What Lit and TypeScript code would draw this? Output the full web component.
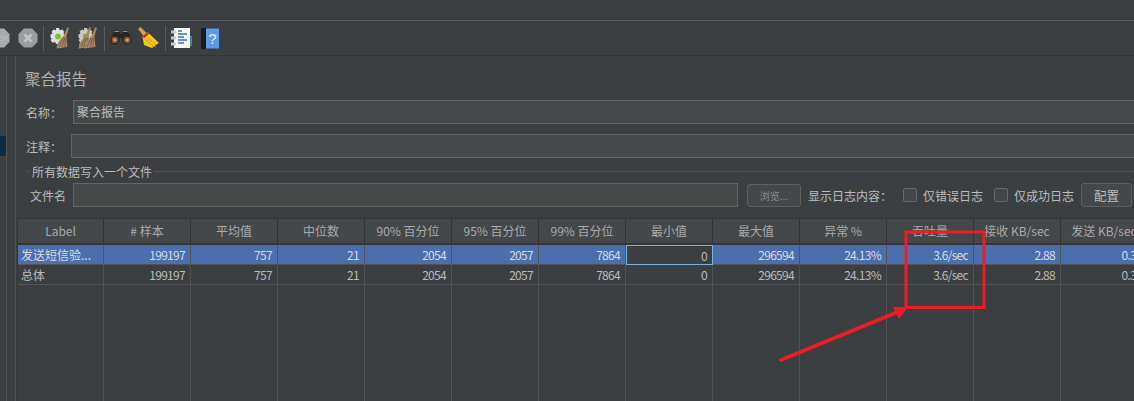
import { LitElement, css, html, svg } from 'lit'
import { customElement } from 'lit/decorators.js'

const headers = ['Label', '# 样本', '平均值', '中位数', '90% 百分位', '95% 百分位', '99% 百分位', '最小值', '最大值', '异常 %', '吞吐量', '接收 KB/sec', '发送 KB/sec']
const selected = ['发送短信验...', '199197', '757', '21', '2054', '2057', '7864', '0', '296594', '24.13%', '3.6/sec', '2.88', '0.30']
const total = ['总体', '199197', '757', '21', '2054', '2057', '7864', '0', '296594', '24.13%', '3.6/sec', '2.88', '0.30']

const stopIcon = (label: string, fill: string) => svg`
  <svg width="20" height="20" viewBox="0 0 20 20">
    <path d="M6 0.500h8l5.500 5.500v8L14 19.500H6L0.500 14V6z" fill=${fill}/>
    ${label
      ? svg`<text x="13" y="13" font-size="7" font-family="Liberation Sans" font-weight="700" text-anchor="middle" fill="#b9babb">${label}</text>`
      : svg`<path d="M6.500 6.500l7 7M13.500 6.500l-7 7" stroke="#c4c5c6" stroke-width="2.600"/>`}
  </svg>`

const gear = svg`
  <path d="M6 1h3l.8 2.200 2.400-.8 2 2-.8 2.400L15.500 7.500v3l-2.100.8.800 2.400-2 2-2.400-.8L9 17H6l-.8-2.100-2.400.8-2-2 .8-2.400L.5 10.500v-3l1.900-.7-.8-2.400 2-2 2.400.8z" fill="#dedede"/>
  <circle cx="8" cy="9.500" r="3" fill="#7cc42f"/>`

const broomHead = svg`
  <path d="M17.500 0l1.500.8-2.600 8.500 1.100 10.700-11 1.500 1-5.500 6.200-7.500z" fill="#a98561"/>
  <path d="M9 20l4-9M12 20l2.500-9M15 20l.5-9" stroke="#80603f"/>`

const clearIcon = svg`
  <svg width="20" height="22" viewBox="0 0 20 22">${gear}${broomHead}</svg>`

const clearAllIcon = svg`
  <svg width="20" height="22" viewBox="0 0 20 22">
    <g opacity="0.85">${gear}</g>
    <g transform="translate(-6 0)">${broomHead}</g>
    ${broomHead}
  </svg>`

const binoculars = svg`
  <svg width="22" height="14" viewBox="0 0 22 14">
    <path d="M4.500 0h4.500l1 3h2l1-3h4.500l4.500 9a5 5 0 0 1-9.500 1.500V7h-3v3.500A5 5 0 0 1 0 9z" fill="#232527"/>
    <circle cx="4.800" cy="9" r="3.300" fill="#8f5a33"/>
    <circle cx="17.200" cy="9" r="3.300" fill="#8f5a33"/>
    <circle cx="4.800" cy="9" r="1.300" fill="#d8b080"/>
    <circle cx="17.200" cy="9" r="1.300" fill="#d8b080"/>
    <path d="M4.500 0.500h4.500M13 0.500h4.500" stroke="#8a8c8e"/>
  </svg>`

const broom = svg`
  <svg width="21" height="22" viewBox="0 0 21 22">
    <path d="M0 2l2.500-2 6.500 6.500-3 3z" fill="#d2a24c"/>
    <path d="M4.500 9.500l5-4.500 11.500 11-3 2-1-.8.500 2.800-2.500-.8-.5 2-8.500-3.200z" fill="#f2c81e"/>
    <path d="M4.500 9.500l5-4.500 1.500 1.700-5 4.500z" fill="#d52222"/>
    <path d="M8 13l7 6M10 11l7 6" stroke="#c49a12"/>
  </svg>`

const notes = svg`
  <svg width="21" height="20" viewBox="0 0 21 20">
    <rect x="17" y="8" width="4" height="5" fill="#3c7fd0"/>
    <rect x="17" y="13" width="4" height="5" fill="#3f9b3a"/>
    <rect x="3" y="0" width="16" height="20" fill="#fbfbfb"/>
    <path d="M7 3h4M7 6h9M7 9h6M7 12h9M7 15h6" stroke="#2f72d8" stroke-width="1.300"/>
    <path d="M0 4h5M0 10h5M0 16h5" stroke="#c9c9c9" stroke-width="3"/>
  </svg>`

const helpBook = svg`
  <svg width="18" height="21" viewBox="0 0 18 21">
    <rect x="0" y="0" width="6" height="21" rx="1" fill="#17191b"/>
    <rect x="5" y="0.500" width="13" height="20" fill="#5a9bea"/>
    <text x="11.500" y="15.500" font-size="15" font-family="Liberation Sans" text-anchor="middle" fill="#e6f0fb">?</text>
  </svg>`

@customElement('app-root')
export class AppRoot extends LitElement {
  static styles = css`
    :host {
      display: block;
      width: 1134px;
      height: 401px;
      position: relative;
      overflow: hidden;
      background: #3c3f41;
      color: #bbbbbb;
      font-family: "Noto Sans CJK SC", "Noto Sans", sans-serif;
      font-size: 12px;
    }
    .menubar {
      height: 20px;
      border-bottom: 1px solid #5a5b5c;
    }
    .toolbar {
      height: 34px;
      border-bottom: 1px solid #323436;
      display: flex;
      align-items: center;
    }
    .toolbar > * { flex: none; }
    .stop-first { margin-left: -10px; }
    .stop-second { margin-left: 8px; }
    .sep {
      width: 1px;
      height: 25px;
      background: #5b5d5f;
    }
    .icon { display: flex; align-items: center; justify-content: center; }
    .body {
      display: flex;
      height: 345px;
    }
    .gutter {
      width: 6px;
      border-right: 1px solid #515355;
      padding-top: 80px;
      flex: none;
    }
    .gutter i {
      display: block;
      height: 20px;
      background: #0d2c45;
    }
    .gutter2 {
      width: 8px;
      border-right: 1px solid #515355;
      flex: none;
    }
    .main {
      flex: 1;
      min-width: 0;
      overflow: hidden;
      display: flex;
      flex-direction: column;
    }
    .title {
      font-size: 15.500px;
      line-height: 22px;
      margin: 11px 0 0 9px;
      color: #b0b0b0;
    }
    .row {
      display: flex;
      align-items: center;
      height: 24px;
    }
    .row > * { flex: none; }
    .name-row { margin-top: 11px; padding-left: 10px; }
    .comment-row { margin-top: 10px; padding-left: 10px; }
    .lbl { white-space: nowrap; }
    .name-row .lbl { width: 47px; }
    .comment-row .lbl { width: 45px; }
    .input {
      height: 24px;
      box-sizing: border-box;
      background: #45494a;
      border: 1px solid #646464;
      border-right: none;
      padding-left: 3px;
      line-height: 22px;
      color: #bbbbbb;
    }
    .name-row .input, .comment-row .input { flex: 1; }
    .legend-line {
      display: flex;
      align-items: center;
      height: 14px;
      margin-top: 6px;
      margin-left: 11px;
    }
    .legend-line::before {
      content: '';
      width: 3px;
      height: 1px;
      background: #515355;
      margin-right: 2px;
    }
    .legend-line::after {
      content: '';
      flex: 1;
      height: 1px;
      background: #515355;
      margin-left: 2px;
    }
    .file-row { margin-top: 5px; padding-left: 14px; }
    .file-row .lbl { width: 43px; }
    .file-row .input {
      width: 665px;
      border-right: 1px solid #646464;
    }
    .btn {
      box-sizing: border-box;
      border: 1px solid #5e6060;
      border-radius: 3px;
      background: #45484a;
      display: flex;
      align-items: center;
      justify-content: center;
    }
    .browse {
      width: 54px;
      height: 23px;
      margin-left: 9px;
      font-size: 10px;
      color: #8c8e8f;
    }
    .file-row .log-label { margin-left: 7px; width: 95px; }
    .check {
      width: 14px;
      height: 14px;
      box-sizing: border-box;
      border: 1px solid #66686a;
      border-radius: 2px;
      background: #43474a;
    }
    .check-label { margin-left: 6px; white-space: nowrap; }
    .w1 { width: 71px; }
    .w2 { width: 67px; }
    .config {
      width: 51px;
      height: 24px;
      font-size: 12.500px;
    }
    .table {
      margin-top: 11px;
      margin-left: 1px;
      flex: 1;
      display: grid;
      grid-template-columns: 86px repeat(12, 87px);
      grid-template-rows: 26px 20px 20px 1fr;
      border-top: 1px solid #323436;
      border-left: 1px solid #323436;
      min-height: 0;
    }
    .th, .td {
      box-sizing: border-box;
      white-space: nowrap;
      overflow: hidden;
      line-height: 19px;
    }
    .th {
      background: #45484a;
      border-right: 1px solid #323436;
      border-bottom: 2px solid #323436;
      text-align: center;
      line-height: 24px;
      color: #a9abac;
    }
    .td {
      text-align: right;
      padding: 0 5px 0 0;
      border-right: 1px solid #515355;
      border-bottom: 1px solid #515355;
    }
    .td.first { text-align: left; padding-left: 3px; }
    .td.num { letter-spacing: -0.700px; }
    .td.sel { background: #4b6eaf; color: #d6dce8; }
    .td.focus {
      background: #3c3f41;
      color: #bbbbbb;
      border: 1px solid #7ab4e0;
    }
    .fill { border-right: 1px solid #515355; }
    .overlay {
      position: absolute;
      left: 0;
      top: 0;
      pointer-events: none;
    }
  `

  render() {
    return html`
      <div class="menubar"></div>
      <div class="toolbar">
        <span class="icon stop-first">${stopIcon('OP', '#a9abac')}</span>
        <span class="icon stop-second">${stopIcon('', '#9a9c9d')}</span>
        <span class="sep" style="margin-left:5px"></span>
        <span class="icon" style="margin-left:6px">${clearIcon}</span>
        <span class="icon" style="margin-left:8px">${clearAllIcon}</span>
        <span class="sep" style="margin-left:6px"></span>
        <span class="icon" style="margin-left:5px">${binoculars}</span>
        <span class="icon" style="margin-left:6px">${broom}</span>
        <span class="sep" style="margin-left:6px"></span>
        <span class="icon" style="margin-left:5px">${notes}</span>
        <span class="icon" style="margin-left:9px">${helpBook}</span>
      </div>
      <div class="body">
        <div class="gutter"><i></i></div>
        <div class="gutter2"></div>
        <div class="main">
          <div class="title">聚合报告</div>
          <div class="row name-row">
            <span class="lbl">名称：</span>
            <div class="input">聚合报告</div>
          </div>
          <div class="row comment-row">
            <span class="lbl">注释：</span>
            <div class="input"></div>
          </div>
          <div class="legend-line">所有数据写入一个文件</div>
          <div class="row file-row">
            <span class="lbl">文件名</span>
            <div class="input"></div>
            <div class="btn browse">浏览...</div>
            <span class="lbl log-label">显示日志内容：</span>
            <span class="check"></span>
            <span class="check-label w1">仅错误日志</span>
            <span class="check"></span>
            <span class="check-label w2">仅成功日志</span>
            <div class="btn config">配置</div>
          </div>
          <div class="table">
            ${headers.map((h) => html`<div class="th">${h}</div>`)}
            ${selected.map((v, i) => html`<div class="td ${i === 0 ? 'first' : 'num'} ${i === 7 ? 'focus' : 'sel'}">${v}</div>`)}
            ${total.map((v, i) => html`<div class="td ${i === 0 ? 'first' : 'num'}">${v}</div>`)}
            ${headers.map(() => html`<div class="fill"></div>`)}
          </div>
        </div>
      </div>
      <svg class="overlay" width="1134" height="401" viewBox="0 0 1134 401">
        <rect x="906" y="232" width="78" height="75.500" fill="none" stroke="#ee1c25" stroke-width="3"/>
        <path d="M781 360L900 311" stroke="#ee1c25" stroke-width="4" stroke-linecap="round"/>
        <path d="M908 307L893 307L899 319z" fill="#ee1c25"/>
      </svg>
    `
  }
}
